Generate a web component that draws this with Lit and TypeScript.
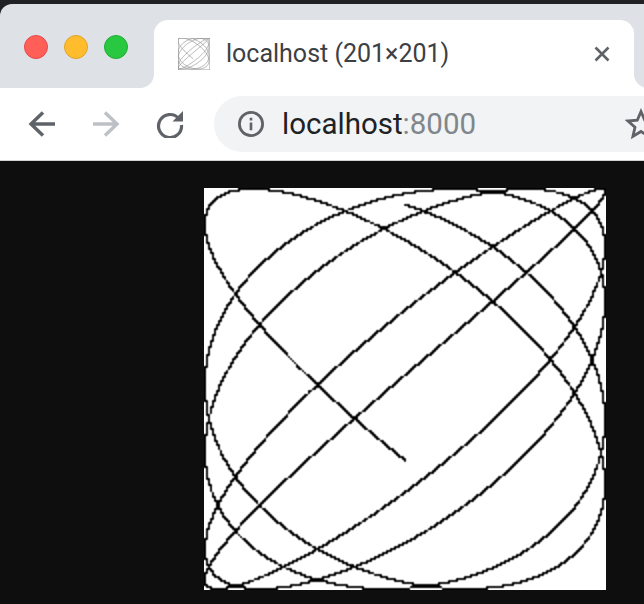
import { LitElement, html, css, svg } from "lit";
import { customElement } from "lit/decorators.js";

const FREQ = 0.849;
const PHASE = -1.175;
const CYCLES = 5;
const SCALE = 2;
const SIDE = 201 * SCALE;
const KERNEL = [0.25, 0.5, 0.25];

function sample(step: number): Array<[number, number]> {
  const pts: Array<[number, number]> = [];
  for (let t = 0; t < CYCLES * 2 * Math.PI; t += step) {
    pts.push([Math.sin(t), Math.sin(t * FREQ + PHASE)]);
  }
  return pts;
}

/** Rasterise the curve at 201x201, double it, and soften it the way a resampled screenshot is. */
function rasterise(): Float32Array {
  let src = new Float32Array(SIDE * SIDE).fill(1);
  for (const [x, y] of sample(0.001)) {
    const px = 100 + Math.floor(x * 100 + 0.5);
    const py = 100 + Math.floor(y * 100 + 0.5);
    for (let j = 0; j < SCALE; j++) {
      for (let i = 0; i < SCALE; i++) src[(py * SCALE + j) * SIDE + px * SCALE + i] = 0;
    }
  }
  const at = (a: Float32Array, x: number, y: number) =>
    a[Math.min(SIDE - 1, Math.max(0, y)) * SIDE + Math.min(SIDE - 1, Math.max(0, x))];
  for (const [dx, dy] of [[1, 0], [0, 1]]) {
    const out = new Float32Array(SIDE * SIDE);
    for (let y = 0; y < SIDE; y++) {
      for (let x = 0; x < SIDE; x++) {
        let v = 0;
        for (let k = -1; k <= 1; k++) v += KERNEL[k + 1] * at(src, x + k * dx, y + k * dy);
        out[y * SIDE + x] = v;
      }
    }
    src = out;
  }
  return src;
}

@customElement("app-root")
export class AppRoot extends LitElement {
  static styles = css`
    :host { display: block; width: 644px; height: 604px; background: #0e0e0e; overflow: hidden; }
    .frame { background: #202124; padding-top: 4px; }
    .strip { height: 84px; background: #dee1e6; display: flex; align-items: flex-end; border-top-left-radius: 12px; }
    .lights { width: 154px; height: 68px; flex: none; display: flex; gap: 16px; padding: 15px 0 0 24px; box-sizing: border-box; }
    .light { width: 24px; height: 24px; border-radius: 50%; box-sizing: border-box; border: 1px solid; }
    .red { background: #ff5f57; border-color: #e5484d; }
    .yellow { background: #ffbd2e; border-color: #e1a325; }
    .green { background: #28c940; border-color: #1fae33; }
    .tab { position: relative; width: 480px; height: 68px; flex: none; background: #fff; border-radius: 14px 14px 0 0; display: flex; align-items: center; box-sizing: border-box; padding: 0 24px; }
    .tab::before, .tab::after { content: ""; position: absolute; bottom: 0; width: 14px; height: 14px; }
    .tab::before { left: -14px; background: radial-gradient(circle at 0 0, transparent 13.5px, #fff 14.5px); }
    .tab::after { right: -14px; background: radial-gradient(circle at 100% 0, transparent 13.5px, #fff 14.5px); }
    .fav { width: 32px; height: 32px; display: block; flex: none; }
    .title { font: 25px Roboto, sans-serif; color: #3c4043; margin-left: 16px; flex: 1; white-space: nowrap; padding-bottom: 2px; }
    .close { width: 16px; height: 16px; flex: none; }
    .toolbar { height: 72px; background: #fff; border-bottom: 1px solid #d0d1d3; display: flex; align-items: center; overflow: hidden; padding: 0 0 0 28px; }
    .nav { width: 28px; height: 28px; flex: none; margin-right: 36px; }
    .nav.last { margin-right: 30px; }
    .omni { height: 56px; flex: none; width: 470px; border-radius: 28px; background: #f1f3f4; display: flex; align-items: center; padding-left: 24px; box-sizing: border-box; }
    .info { width: 26px; height: 26px; flex: none; }
    .url { font: 29.5px Roboto, sans-serif; color: #202124; margin-left: 18px; white-space: nowrap; flex: none; width: 343px; }
    .url span { color: #80868b; }
    .star { width: 32px; height: 32px; flex: none; }
    .page { padding: 26px 0 0 204px; background: #0e0e0e; margin-top: 1px; }
    canvas { display: block; width: 402px; height: 402px; }
  `;

  firstUpdated() {
    const c = this.renderRoot.querySelector("canvas") as HTMLCanvasElement;
    const g = c.getContext("2d")!;
    const soft = rasterise();
    const img = g.createImageData(SIDE, SIDE);
    for (let i = 0; i < soft.length; i++) {
      const b = Math.round(Math.max(0, Math.min(1, (soft[i] - 0.5) * 1.15 + 0.52)) * 255);
      img.data[i * 4] = b;
      img.data[i * 4 + 1] = b;
      img.data[i * 4 + 2] = b;
      img.data[i * 4 + 3] = 255;
    }
    g.putImageData(img, 0, 0);
  }

  render() {
    const fav = sample(0.02)
      .map(([x, y]) => `${(15.5 + x * 15.5).toFixed(2)},${(15.5 + y * 15.5).toFixed(2)}`)
      .join(" ");
    return html`
      <div class="frame">
        <div class="strip">
          <div class="lights">
            <div class="light red"></div>
            <div class="light yellow"></div>
            <div class="light green"></div>
          </div>
          <div class="tab">
            <svg class="fav" viewBox="0 0 32 32">
              <rect x="0.25" y="0.25" width="31.5" height="31.5" fill="#fff" stroke="#9a9a9a" stroke-width="0.5"></rect>
              ${svg`<polyline points=${fav} fill="none" stroke="#8f8f8f" stroke-width="0.7"></polyline>`}
            </svg>
            <div class="title">localhost (201×201)</div>
            <svg class="close" viewBox="0 0 16 16"><path d="M1.5 1.5L14.5 14.5M14.5 1.5L1.5 14.5" stroke="#5f6368" stroke-width="2.6" fill="none"></path></svg>
          </div>
        </div>
        <div class="toolbar">
          <svg class="nav" viewBox="0 0 28 28"><path d="M27 14H4M15 2.5L3 14L15 25.5" stroke="#5f6368" stroke-width="3.4" fill="none"></path></svg>
          <svg class="nav" viewBox="0 0 28 28"><path d="M1 14H24M13 2.5L25 14L13 25.5" stroke="#bdc1c6" stroke-width="3.4" fill="none"></path></svg>
          <svg class="nav last" viewBox="0 0 28 28"><path d="M22.5 8.2A11.5 11.5 0 1 0 25.5 15" stroke="#5f6368" stroke-width="3.2" fill="none"></path><path d="M27 1V11.5H16.5Z" fill="#5f6368"></path></svg>
          <div class="omni">
            <svg class="info" viewBox="0 0 26 26"><circle cx="13" cy="13" r="11.6" fill="none" stroke="#5f6368" stroke-width="2.8"></circle><path d="M11.7 11.5h2.6v7.8h-2.6zM11.7 6.8h2.6v2.6h-2.6z" fill="#5f6368"></path></svg>
            <div class="url">localhost<span>:8000</span></div>
            <svg class="star" viewBox="0 0 32 32"><path d="M16 3.5L19.7 12.2L29 13L22 19.2L24.1 28.4L16 23.5L7.9 28.4L10 19.2L3 13L12.3 12.2Z" fill="none" stroke="#5f6368" stroke-width="2.8" stroke-linejoin="miter"></path></svg>
          </div>
        </div>
      </div>
      <div class="page"><canvas width="402" height="402"></canvas></div>
    `;
  }
}
